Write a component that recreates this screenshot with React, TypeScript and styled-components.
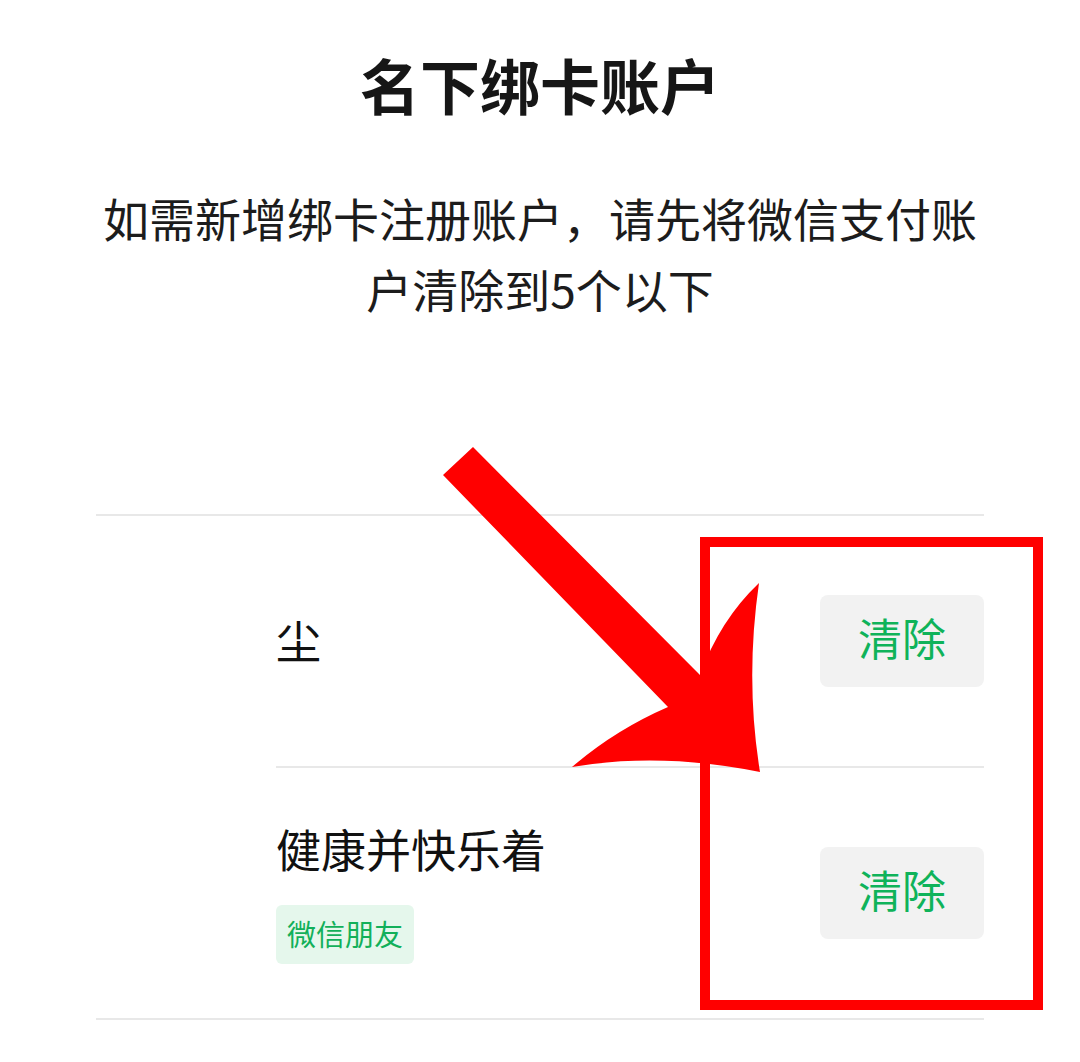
import React from "react";
import styled, { createGlobalStyle } from "styled-components";

const GlobalStyle = createGlobalStyle`
  html, body {
    margin: 0;
    padding: 0;
    background: #ffffff;
  }
  body {
    font-family: "Noto Sans CJK SC", "Noto Sans", sans-serif;
    color: #111111;
  }
`;

const Page = styled.div`
  position: relative;
  width: 1080px;
  height: 1062px;
  overflow: hidden;
  padding-top: 42px;
  box-sizing: border-box;
`;

const Title = styled.h1`
  margin: 0;
  font-size: 60px;
  line-height: 84px;
  font-weight: 700;
  text-align: center;
  color: #161616;
`;

const Subtitle = styled.p`
  margin: 56px auto 0;
  width: 890px;
  font-size: 46px;
  line-height: 71px;
  text-align: center;
  color: #1c1c1c;
`;

const List = styled.div`
  margin: 190px 96px 0;
  border-top: 2px solid #e8e8e8;
  border-bottom: 2px solid #e8e8e8;
`;

const Row = styled.div`
  padding-left: 180px;
`;

const RowBody = styled.div<{ last?: boolean }>`
  height: 250px;
  display: flex;
  align-items: center;
  justify-content: space-between;
  border-bottom: ${(p) => (p.last ? "none" : "2px solid #e8e8e8")};
`;

const Info = styled.div`
  display: flex;
  flex-direction: column;
  align-items: flex-start;
  gap: 28px;
  padding-bottom: 2px;
`;

const Name = styled.div`
  font-size: 45px;
  line-height: 56px;
  color: #111111;
`;

const Tag = styled.span`
  display: inline-flex;
  align-items: center;
  height: 59px;
  padding: 0 11px 2px;
  box-sizing: border-box;
  border-radius: 6px;
  background: #e5f7ec;
  color: #12b05a;
  font-size: 29px;
`;

const ClearButton = styled.button`
  width: 164px;
  height: 92px;
  border: none;
  border-radius: 8px;
  background: #f2f2f2;
  color: #0fb35a;
  font-family: inherit;
  font-size: 44px;
  padding: 0 0 8px;
`;

const Highlight = styled.div`
  position: absolute;
  left: 700px;
  top: 537px;
  width: 343px;
  height: 473px;
  border: 10px solid #ff0000;
  box-sizing: border-box;
  pointer-events: none;
`;

const ArrowLayer = styled.svg`
  position: absolute;
  left: 0;
  top: 0;
  pointer-events: none;
`;

const accounts = [
  { name: "尘" },
  { name: "健康并快乐着", tag: "微信朋友" },
];

export default function App() {
  return (
    <>
      <GlobalStyle />
      <Page>
        <Title>名下绑卡账户</Title>
        <Subtitle>如需新增绑卡注册账户，请先将微信支付账户清除到5个以下</Subtitle>
        <List>
          {accounts.map((a, idx) => (
            <Row key={idx}>
              <RowBody last={idx === accounts.length - 1}>
                <Info>
                  <Name>{a.name}</Name>
                  {a.tag && <Tag>{a.tag}</Tag>}
                </Info>
                <ClearButton>清除</ClearButton>
              </RowBody>
            </Row>
          ))}
        </List>
        <Highlight />
        <ArrowLayer width="1080" height="1062" viewBox="0 0 1080 1062">
          <path
            d="M473 447 L700 675 Q720 620 759 583 Q745 680 760 772 Q660 752 572 767 Q615 730 668 707 L443 475 Z"
            fill="#ff0000"
          />
        </ArrowLayer>
      </Page>
    </>
  );
}
